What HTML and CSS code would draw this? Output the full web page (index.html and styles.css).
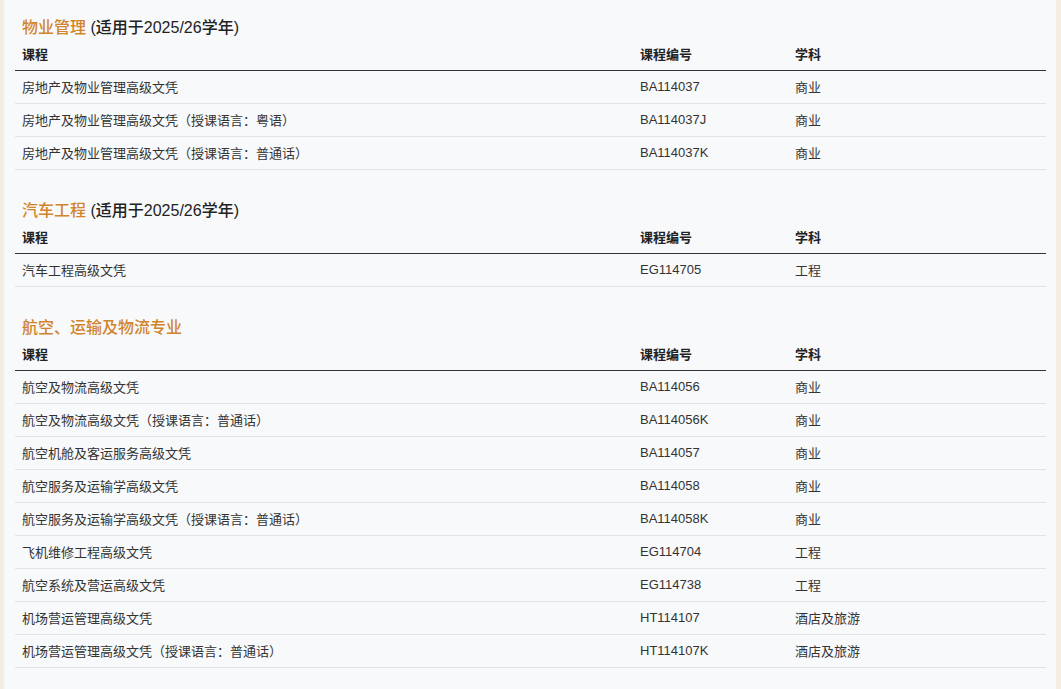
FILE: index.html
```html
<!DOCTYPE html>
<html lang="zh-CN">
<head>
<meta charset="utf-8">
<title>课程</title>
<link rel="stylesheet" href="styles.css">
</head>
<body>
<div class="page">
  <section class="group">
    <h2 class="group-title"><span class="accent">物业管理</span> (适用于2025/26学年)</h2>
    <table class="courses">
      <colgroup><col class="c-name"><col class="c-code"><col class="c-subj"></colgroup>
      <thead><tr><th>课程</th><th>课程编号</th><th>学科</th></tr></thead>
      <tbody>
        <tr><td>房地产及物业管理高级文凭</td><td>BA114037</td><td>商业</td></tr>
        <tr><td>房地产及物业管理高级文凭（授课语言：粤语）</td><td>BA114037J</td><td>商业</td></tr>
        <tr><td>房地产及物业管理高级文凭（授课语言：普通话）</td><td>BA114037K</td><td>商业</td></tr>
      </tbody>
    </table>
  </section>
  <section class="group">
    <h2 class="group-title"><span class="accent">汽车工程</span> (适用于2025/26学年)</h2>
    <table class="courses">
      <colgroup><col class="c-name"><col class="c-code"><col class="c-subj"></colgroup>
      <thead><tr><th>课程</th><th>课程编号</th><th>学科</th></tr></thead>
      <tbody>
        <tr><td>汽车工程高级文凭</td><td>EG114705</td><td>工程</td></tr>
      </tbody>
    </table>
  </section>
  <section class="group">
    <h2 class="group-title"><span class="accent">航空、运输及物流专业</span></h2>
    <table class="courses">
      <colgroup><col class="c-name"><col class="c-code"><col class="c-subj"></colgroup>
      <thead><tr><th>课程</th><th>课程编号</th><th>学科</th></tr></thead>
      <tbody>
        <tr><td>航空及物流高级文凭</td><td>BA114056</td><td>商业</td></tr>
        <tr><td>航空及物流高级文凭（授课语言：普通话）</td><td>BA114056K</td><td>商业</td></tr>
        <tr><td>航空机舱及客运服务高级文凭</td><td>BA114057</td><td>商业</td></tr>
        <tr><td>航空服务及运输学高级文凭</td><td>BA114058</td><td>商业</td></tr>
        <tr><td>航空服务及运输学高级文凭（授课语言：普通话）</td><td>BA114058K</td><td>商业</td></tr>
        <tr><td>飞机维修工程高级文凭</td><td>EG114704</td><td>工程</td></tr>
        <tr><td>航空系统及营运高级文凭</td><td>EG114738</td><td>工程</td></tr>
        <tr><td>机场营运管理高级文凭</td><td>HT114107</td><td>酒店及旅游</td></tr>
        <tr><td>机场营运管理高级文凭（授课语言：普通话）</td><td>HT114107K</td><td>酒店及旅游</td></tr>
      </tbody>
    </table>
  </section>
</div>
</body>
</html>
```
FILE: styles.css
```css
html, body {
  margin: 0;
  padding: 0;
}
body {
  background: #f4ede0;
  font-family: "Liberation Sans", "Noto Sans CJK SC", sans-serif;
  color: #333;
}
.page {
  margin: 0 5px 0 4px;
  min-height: 689px;
  background: #f8f9fb;
  padding: 18px 10px 0 11px;
  box-sizing: border-box;
}
.group {
  margin-bottom: 31px;
}
.group-title {
  margin: 0;
  padding-left: 7px;
  font-size: 16px;
  line-height: 20px;
  font-weight: 500;
  color: #222;
}
.accent {
  color: #d2842a;
}
.courses {
  width: 100%;
  border-collapse: collapse;
  table-layout: fixed;
  font-size: 13px;
}
.c-name { width: 618px; }
.c-code { width: 155px; }
.c-subj { width: auto; }
.courses th {
  text-align: left;
  font-weight: bold;
  color: #222;
  height: 31px;
  padding: 0 7px 1px;
  border-bottom: 1px solid #333;
  vertical-align: middle;
}
.courses td {
  height: 31px;
  padding: 0 7px 1px;
  border-bottom: 1px solid #e1e3e6;
  vertical-align: middle;
  color: #333;
}
```
